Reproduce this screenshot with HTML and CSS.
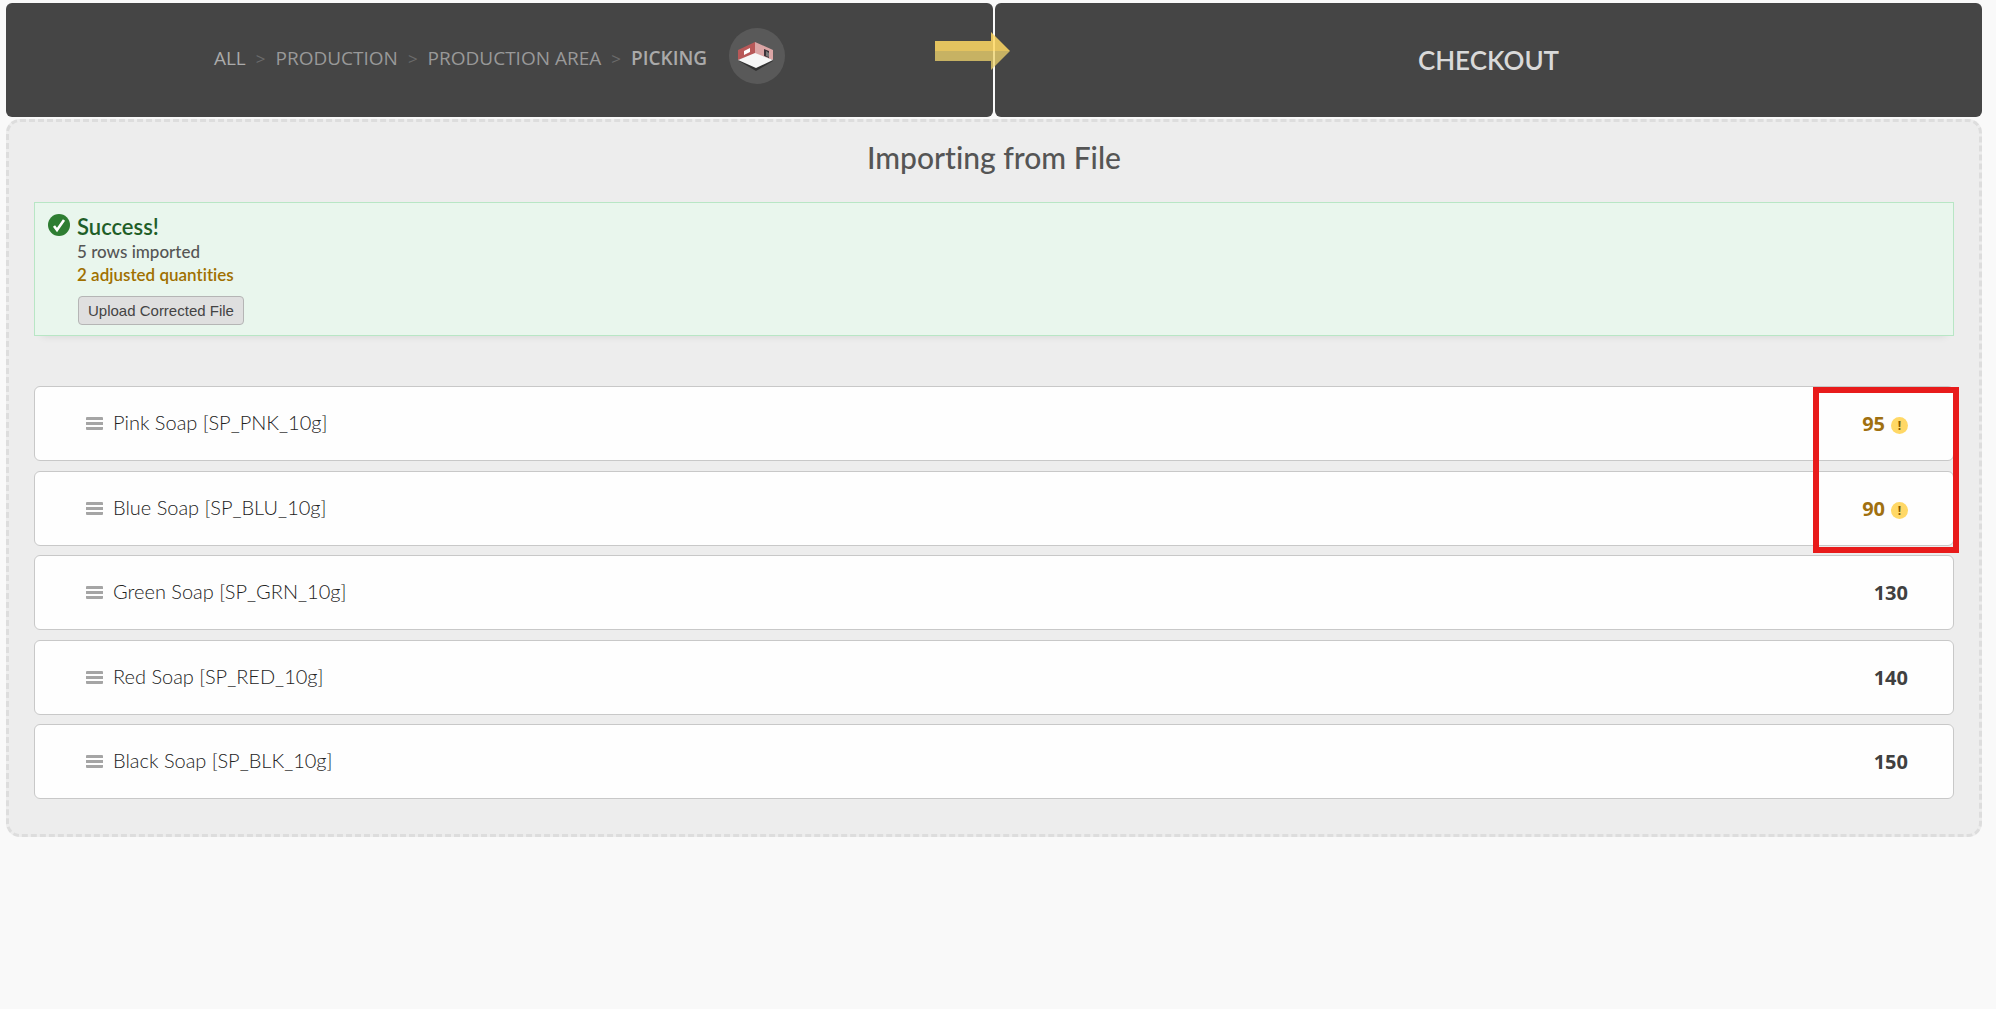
FILE: index.html
```html
<!DOCTYPE html>
<html lang="en">
<head>
    <meta charset="UTF-8">
    <meta name="viewport" content="width=device-width, initial-scale=1.0">
    <title>Importing from File</title>
    <link rel="stylesheet" href="styles.css">
</head>
<body>
    <header class="top">
        <nav class="top-box crumbs">
            <div class="trail">
                <a href="#" class="crumb-all">ALL</a>
                <span class="sep">&gt;</span>
                <a href="#">PRODUCTION</a>
                <span class="sep">&gt;</span>
                <a href="#">PRODUCTION AREA</a>
                <span class="sep">&gt;</span>
                <a href="#" class="current">PICKING</a>
            </div>
            <svg class="room" viewBox="0 0 56 56" aria-hidden="true">
                <circle cx="28" cy="28" r="28" fill="#595959"/>
                <path d="M10 33 L27 43 L44 33 L44 31 L27 38 L10 31Z" fill="#333"/>
                <path d="M9 22 L26 14 V26 L9 32Z" fill="#b85858"/>
                <path d="M26 14 L44 22 V32 L26 26Z" fill="#dba5a5"/>
                <path d="M15 23 L21 20 V24 L15 27Z" fill="#fff"/>
                <path d="M35 21 L40 23 V30 L35 28Z" fill="#3c3338"/>
                <path d="M37 23 L40 25 V29 L37 28Z" fill="#777"/>
                <path d="M26 25 L44 32 L27 40 L9 32Z" fill="#f7f7f7"/>
            </svg>
        </nav>
        <div class="top-box">
            <h1>CHECKOUT</h1>
        </div>
        <svg class="arrow" viewBox="0 0 75 38" aria-hidden="true">
            <path d="M0 9 H56 V0 L75 19 H0Z" fill="#ffd864" fill-opacity="0.86"/>
            <path d="M0 19 H75 L56 38 V29 H0Z" fill="#eed36c" fill-opacity="0.77"/>
        </svg>
    </header>

    <main class="panel">
        <h2>Importing from File</h2>

        <div class="message">
            <svg class="tick" viewBox="0 0 22 22" aria-hidden="true">
                <circle cx="11" cy="11" r="11" fill="#2e7d32"/>
                <path d="M6 12 L9 16 L16 6" fill="none" stroke="#fff" stroke-width="2.6"/>
            </svg>
            <div>
                <h3>Success!</h3>
                <p>5 rows imported</p>
                <p class="adjusted">2 adjusted quantities</p>
                <button type="button">Upload Corrected File</button>
            </div>
        </div>

        <div class="list">
            <ul>
                <li>
                    <span class="grip"></span>
                    <span class="name">Pink Soap [SP_PNK_10g]</span>
                    <span class="qty changed">95</span>
                    <span class="warn">!</span>
                </li>
                <li>
                    <span class="grip"></span>
                    <span class="name">Blue Soap [SP_BLU_10g]</span>
                    <span class="qty changed">90</span>
                    <span class="warn">!</span>
                </li>
                <li>
                    <span class="grip"></span>
                    <span class="name">Green Soap [SP_GRN_10g]</span>
                    <span class="qty">130</span>
                </li>
                <li>
                    <span class="grip"></span>
                    <span class="name">Red Soap [SP_RED_10g]</span>
                    <span class="qty">140</span>
                </li>
                <li>
                    <span class="grip"></span>
                    <span class="name">Black Soap [SP_BLK_10g]</span>
                    <span class="qty">150</span>
                </li>
            </ul>
            <div class="highlight"></div>
        </div>
    </main>
</body>
</html>
```
FILE: styles.css
```css
* {
    box-sizing: border-box;
}
body {
    font-family: "Century Gothic", Lato, sans-serif;
    font-variant-ligatures: none;
    margin: 0;
    padding: 3px 14px 0 6px;
    background: #f9f9f9;
    color: #444;
}
h1, h2, h3, p, ul {
    margin: 0;
    padding: 0;
}
.top {
    display: flex;
    gap: 2px;
    position: relative;
    margin-bottom: 2px;
}
.top-box {
    flex: 1;
    height: 114px;
    display: flex;
    align-items: center;
    justify-content: center;
    background: #454545;
    border-radius: 6px;
}
.top-box h1 {
    font-size: 26px;
    line-height: 32px;
    font-weight: 600;
    color: #d9d9d9;
}
.crumbs {
    font-family: "Open Sans", sans-serif;
    font-size: 19px;
    padding-bottom: 8px;
}
.trail {
    display: flex;
    align-items: center;
    gap: 10px;
    padding-top: 4px;
}
.crumbs a {
    color: #999;
    text-decoration: none;
}
.crumbs .crumb-all {
    color: #aaa;
}
.crumbs .current {
    color: #aaa;
    font-weight: 600;
}
.sep {
    color: #6b6b6b;
    font-size: 17px;
}
.room {
    width: 56px;
    height: 56px;
    margin-left: 22px;
}
/* sits across the gap between the two boxes */
.arrow {
    position: absolute;
    top: 29px;
    left: calc(50% - 59px);
    width: 75px;
    height: 38px;
}
.panel {
    background: #ededed;
    border: 3px dashed #ddd;
    border-radius: 14px;
    padding: 15px 25px 35px;
}
.panel h2 {
    font-size: 30px;
    line-height: 40px;
    font-weight: 500;
    text-align: center;
    color: #555;
    margin-bottom: 25px;
}
.message {
    display: flex;
    gap: 7px;
    background: #e9f6ed;
    border: 1px solid #b8e6c5;
    box-shadow: 0 8px 8px -8px rgba(0, 0, 0, 0.1);
    padding: 11px 13px 10px;
    margin-bottom: 50px;
}
.tick {
    width: 22px;
    height: 22px;
}
.message h3 {
    font-size: 22px;
    line-height: 26px;
    font-weight: 600;
    color: #1f5e28;
}
.message p {
    font-size: 17px;
    line-height: 23px;
    font-weight: 500;
    color: #555;
}
.message .adjusted {
    font-weight: 600;
    color: #a07000;
}
.message button {
    display: block;
    font-family: "Liberation Sans", Arial, sans-serif;
    font-size: 15px;
    height: 29px;
    padding: 0 9px;
    margin: 10px 0 0 1px;
    background: #dfdfdf;
    border: 1px solid #b5b5b5;
    border-radius: 4px;
    color: #444;
}
.list {
    position: relative;
}
.list ul {
    list-style: none;
}
.list li {
    display: flex;
    align-items: center;
    height: 75px;
    padding: 0 45px 0 51px;
    margin-bottom: 9px;
    background: #fefefe;
    border: 1px solid #c8c8c8;
    border-radius: 6px;
}
.list li:nth-child(odd) {
    margin-bottom: 10px;
}
.list li:last-child {
    margin-bottom: 0;
}
.grip {
    width: 17px;
    height: 13px;
    border-top: 3px solid #a5a5a5;
    border-bottom: 3px solid #a5a5a5;
    background: linear-gradient(#a5a5a5, #a5a5a5) center / 100% 3px no-repeat;
    border-radius: 1px;
}
.name {
    flex: 1;
    font-size: 20px;
    font-weight: 300;
    color: #222;
    margin-left: 10px;
    padding-bottom: 4px;
}
.qty {
    font-family: "Open Sans", sans-serif;
    font-size: 20px;
    font-weight: bold;
    color: #404040;
}
.changed {
    color: #a07010;
}
.warn {
    width: 17px;
    height: 17px;
    margin: 4px 0 0 6px;
    border-radius: 50%;
    background: #ffd866;
    color: #805a00;
    font: bold 12px/17px "Open Sans", sans-serif;
    text-align: center;
}
/* red frame round the adjusted quantities */
.highlight {
    position: absolute;
    top: 1px;
    right: -5px;
    width: 146px;
    height: 166px;
    border: 6px solid #e81b1b;
}
```
